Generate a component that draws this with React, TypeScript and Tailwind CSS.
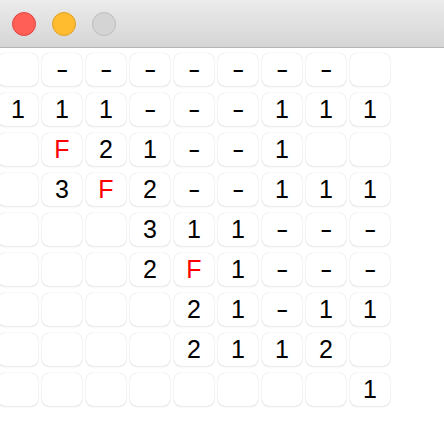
import React from "react";

const rows: string[][] = [
  ["", "-", "-", "-", "-", "-", "-", "-", ""],
  ["1", "1", "1", "-", "-", "-", "1", "1", "1"],
  ["", "F", "2", "1", "-", "-", "1", "", ""],
  ["", "3", "F", "2", "-", "-", "1", "1", "1"],
  ["", "", "", "3", "1", "1", "-", "-", "-"],
  ["", "", "", "2", "F", "1", "-", "-", "-"],
  ["", "", "", "", "2", "1", "-", "1", "1"],
  ["", "", "", "", "2", "1", "1", "2", ""],
  ["", "", "", "", "", "", "", "", "1"],
];

export default function App() {
  return (
    <div className="w-[444px] h-[432px] bg-white overflow-hidden" style={{ fontFamily: '"Liberation Sans", Arial, sans-serif' }}>
      <div className="h-[48px] bg-gradient-to-b from-[#ececec] to-[#d5d5d5] border-b border-[#b5b5b5] flex items-center gap-[16px] pl-[12px]">
        <div className="w-[24px] h-[24px] rounded-full bg-[#ff5f57] border border-[#e0443e]" />
        <div className="w-[24px] h-[24px] rounded-full bg-[#febc2e] border border-[#dea123]" />
        <div className="w-[24px] h-[24px] rounded-full bg-[#d4d4d4] border border-[#bdbdbd]" />
      </div>
      <div className="ml-[-2px] mt-[5px] flex flex-col gap-[7px]">
        {rows.map((r, i) => (
          <div key={i} className="flex gap-[4px]">
            {r.map((c, j) => (
              <div
                key={j}
                className={`w-[40px] h-[33px] rounded-[7px] bg-white shadow-[0_0_1px_rgba(0,0,0,0.22),0_1px_2px_rgba(0,0,0,0.08)] flex items-center justify-center text-[25px] leading-none ${c === "F" ? "text-[#ff0000]" : "text-black"}`}
              >
                {c === "-" ? <span className="inline-block scale-x-150">-</span> : c}
              </div>
            ))}
          </div>
        ))}
      </div>
    </div>
  );
}
